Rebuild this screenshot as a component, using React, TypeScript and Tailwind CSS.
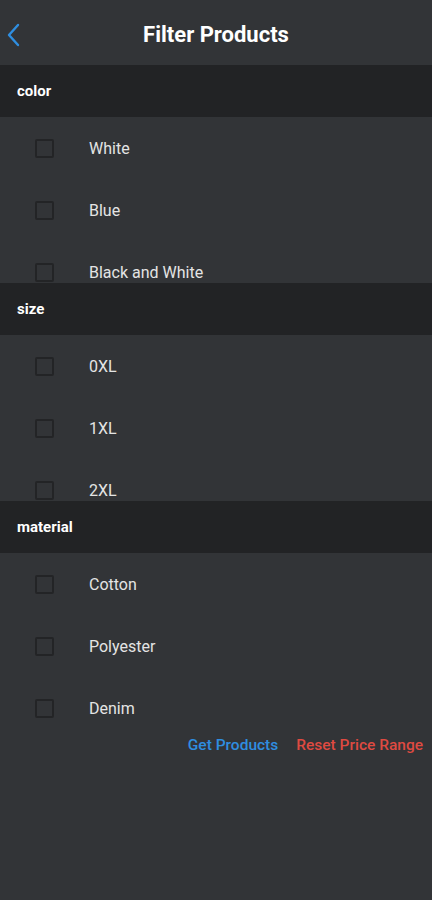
const SECTIONS = [
  { title: "color", options: ["White", "Blue", "Black and White"] },
  { title: "size", options: ["0XL", "1XL", "2XL"] },
  { title: "material", options: ["Cotton", "Polyester", "Denim"] },
];

function Checkbox() {
  return <span className="block h-[19px] w-[19px] rounded-[2px] border-2 border-[#232426]" />;
}

export default function App() {
  return (
    <div
      className="flex h-[900px] w-[432px] flex-col bg-[#323437] text-[#e6e6e6]"
      style={{ fontFamily: "Roboto, 'Liberation Sans', sans-serif" }}
    >
      <header className="relative flex h-[65px] shrink-0 items-center justify-center pt-[4px]">
        <button className="absolute left-[6px] top-[22px] text-[#2f8ee0]">
          <svg width="16" height="26" viewBox="0 0 16 26" fill="none">
            <path d="M12 3L3 13l9 10" stroke="currentColor" strokeWidth="2.4" strokeLinecap="round" strokeLinejoin="round" />
          </svg>
        </button>
        <h1 className="text-[22px] font-bold text-white">Filter Products</h1>
      </header>

      {SECTIONS.map((section) => (
        <section key={section.title}>
          <div className="flex h-[52px] items-center bg-[#222325] px-[17px] text-[15px] font-bold text-white">
            {section.title}
          </div>
          <ul className="h-[166px] overflow-hidden">
            {section.options.map((opt) => (
              <li key={opt} className="flex h-[62px] items-center pt-[1px]">
                <span className="ml-[35px] mr-[35px]">
                  <Checkbox />
                </span>
                <span className="text-[16px] text-[#e4e4e4]">{opt}</span>
              </li>
            ))}
          </ul>
        </section>
      ))}

      <div className="mt-[15px] flex justify-end gap-[18px] pr-[9px] text-[15.5px] font-medium">
        <button className="text-[#2f8ee0]">Get Products</button>
        <button className="text-[#df4a41]">Reset Price Range</button>
      </div>
    </div>
  );
}
